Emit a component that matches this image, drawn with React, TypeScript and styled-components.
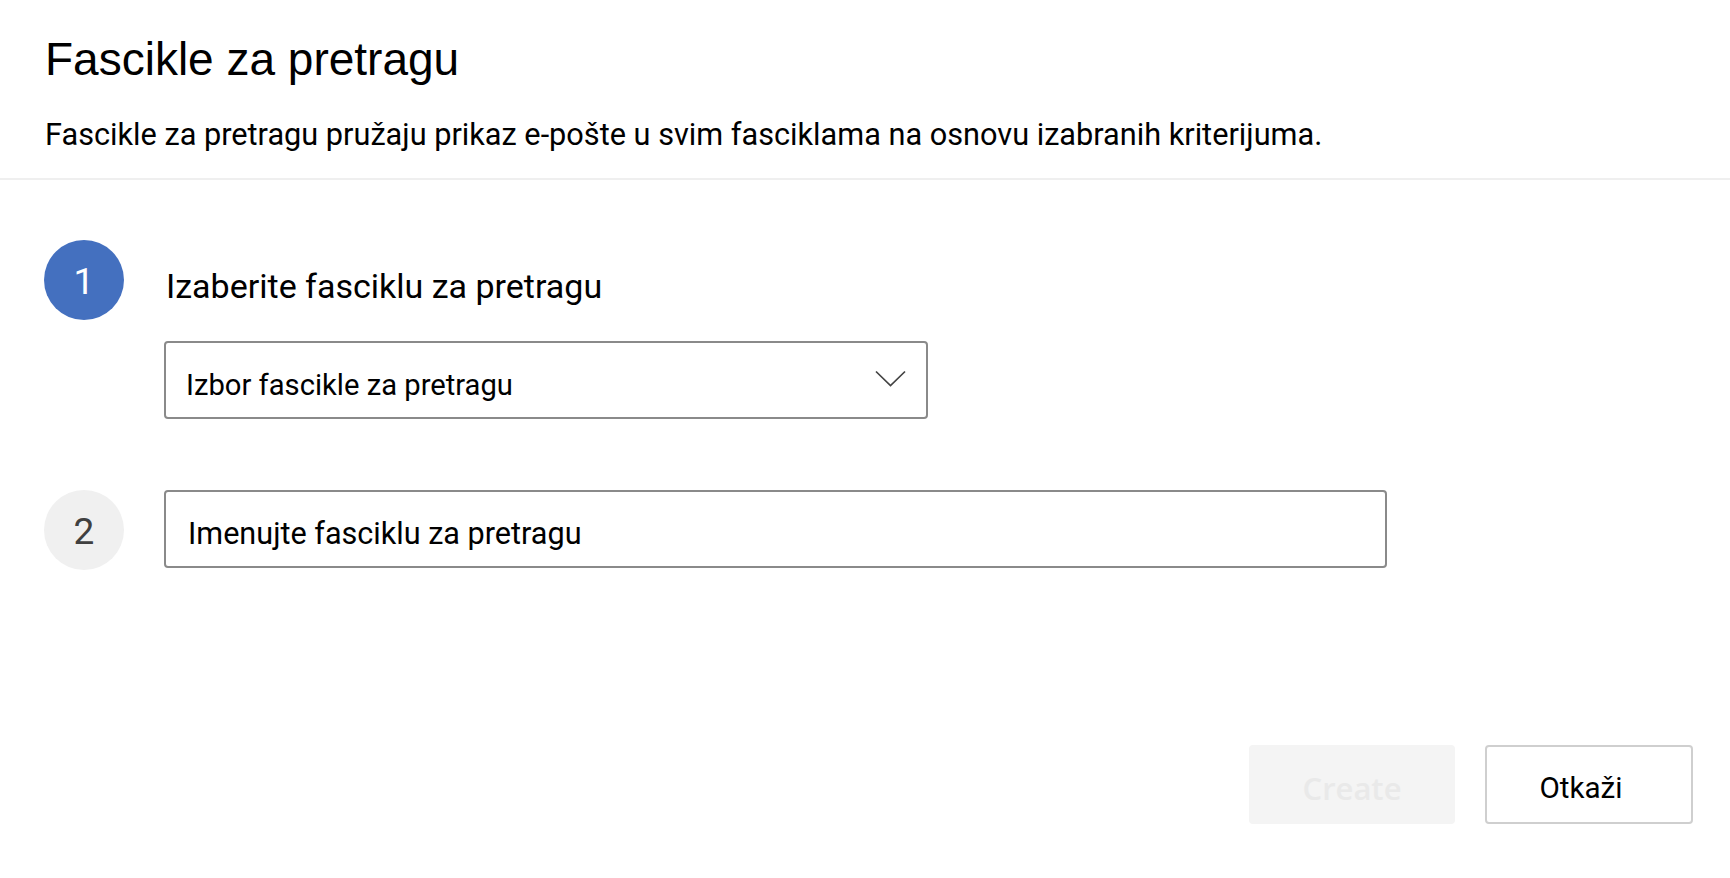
import React from "react";
import styled, { createGlobalStyle } from "styled-components";

const GlobalStyle = createGlobalStyle`
  html, body {
    margin: 0;
    padding: 0;
    background: #ffffff;
  }
  body {
    font-family: Roboto, "Liberation Sans", Arial, sans-serif;
    color: #000000;
  }
`;

const Page = styled.div`
  width: 1730px;
  min-height: 878px;
  background: #ffffff;
`;

const Header = styled.header`
  padding: 31px 45px 25px;
  border-bottom: 2px solid #efefef;
`;

const Title = styled.h1`
  margin: 0;
  font-family: "Liberation Sans", Arial, sans-serif;
  font-weight: 400;
  font-size: 46px;
  line-height: 56px;
`;

const Description = styled.p`
  margin: 30px 0 0;
  font-size: 30.7px;
  line-height: 36px;
`;

const Steps = styled.div`
  padding: 60px 0 0 44px;
  display: flex;
  flex-direction: column;
  gap: 71px;
`;

const StepRow = styled.div`
  display: flex;
  align-items: flex-start;
  gap: 40px;
`;

const StepNumber = styled.div<{ $active?: boolean }>`
  flex: none;
  width: 80px;
  height: 80px;
  border-radius: 50%;
  display: flex;
  align-items: center;
  justify-content: center;
  font-size: 37px;
  padding-top: 3px;
  box-sizing: border-box;
  background: ${(p) => (p.$active ? "#4470bf" : "#f0f0f0")};
  color: ${(p) => (p.$active ? "#ffffff" : "#404040")};
`;

const StepContent = styled.div`
  display: flex;
  flex-direction: column;
`;

const StepLabel = styled.div`
  margin-top: 26px;
  padding-left: 2px;
  font-size: 34px;
  line-height: 40px;
`;

const Field = styled.div<{ $width: number; $size: number }>`
  box-sizing: border-box;
  width: ${(p) => p.$width}px;
  height: 78px;
  padding: 24px 20px 0 20px;
  border: 2px solid #8a8a8a;
  border-radius: 4px;
  display: flex;
  align-items: flex-start;
  justify-content: space-between;
  font-size: ${(p) => p.$size}px;
  line-height: 36px;
  color: #000000;
`;

const SelectField = styled(Field)`
  margin-top: 35px;
`;

const FieldText = styled.span<{ $indent?: number }>`
  padding-left: ${(p) => p.$indent ?? 0}px;
`;

const Chevron = styled.svg`
  margin-top: 3px;
  flex: none;
`;

const Footer = styled.footer`
  margin-top: 175px;
  padding-right: 37px;
  display: flex;
  justify-content: flex-end;
  gap: 30px;
`;

const Button = styled.button<{ $disabled?: boolean }>`
  box-sizing: border-box;
  width: ${(p) => (p.$disabled ? "206px" : "208px")};
  height: 79px;
  border-radius: 4px;
  display: flex;
  align-items: center;
  justify-content: center;
  cursor: ${(p) => (p.$disabled ? "default" : "pointer")};
  background: ${(p) => (p.$disabled ? "#f4f4f4" : "#ffffff")};
  border: ${(p) => (p.$disabled ? "none" : "2px solid #cfcfcf")};
  color: ${(p) => (p.$disabled ? "#e9e9e9" : "#000000")};
  font-family: ${(p) =>
    p.$disabled ? '"Open Sans", "Noto Sans", sans-serif' : 'Roboto, "Liberation Sans", sans-serif'};
  font-weight: ${(p) => (p.$disabled ? 600 : 400)};
  font-size: ${(p) => (p.$disabled ? "31px" : "29.6px")};
  padding: ${(p) => (p.$disabled ? "6px 0 0" : "6px 16px 0 0")};
`;

export default function App() {
  return (
    <Page>
      <GlobalStyle />
      <Header>
        <Title>Fascikle za pretragu</Title>
        <Description>
          Fascikle za pretragu pružaju prikaz e-pošte u svim fasciklama na osnovu izabranih kriterijuma.
        </Description>
      </Header>
      <Steps>
        <StepRow>
          <StepNumber $active>1</StepNumber>
          <StepContent>
            <StepLabel>Izaberite fasciklu za pretragu</StepLabel>
            <SelectField $width={764} $size={29.2}>
              <FieldText>Izbor fascikle za pretragu</FieldText>
              <Chevron width="31" height="17" viewBox="0 0 31 17">
                <path d="M1 1.5 L15.5 15.5 L30 1.5" fill="none" stroke="#444444" strokeWidth="1.7" />
              </Chevron>
            </SelectField>
          </StepContent>
        </StepRow>
        <StepRow>
          <StepNumber>2</StepNumber>
          <Field $width={1223} $size={30.6}>
            <FieldText $indent={2}>Imenujte fasciklu za pretragu</FieldText>
          </Field>
        </StepRow>
      </Steps>
      <Footer>
        <Button $disabled disabled>
          Create
        </Button>
        <Button>Otkaži</Button>
      </Footer>
    </Page>
  );
}
